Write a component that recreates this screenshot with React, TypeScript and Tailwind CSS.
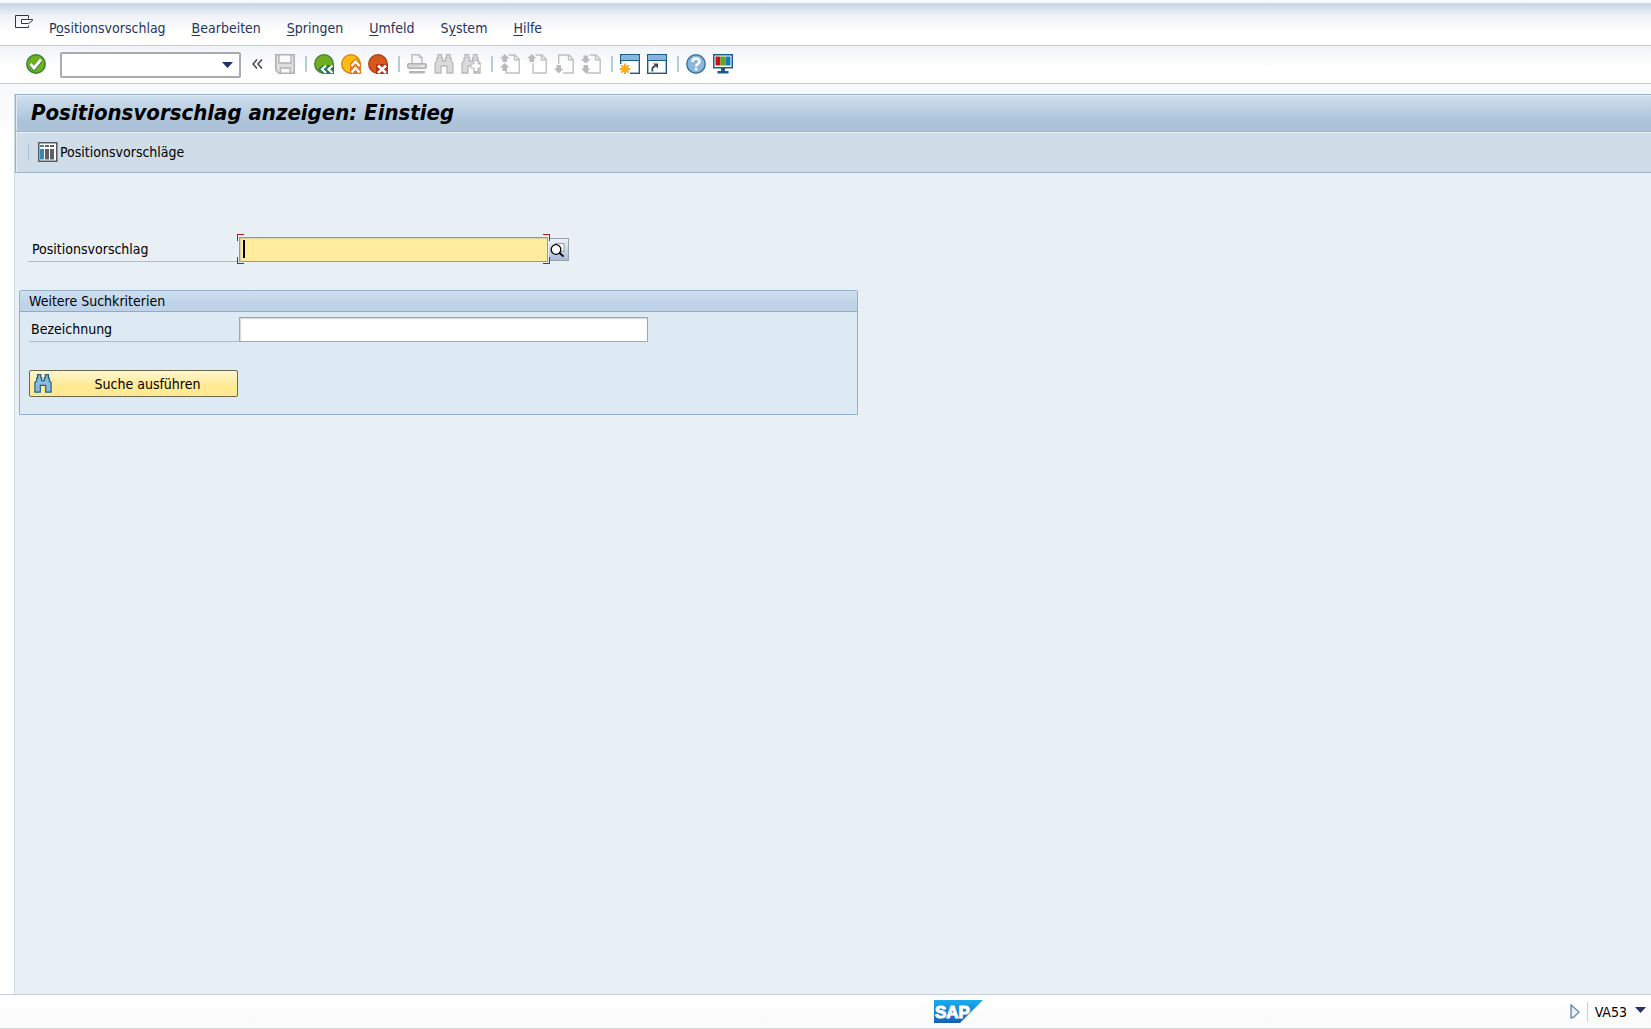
import React from "react";

const menus: [string, string, string][] = [
  ["P", "o", "sitionsvorschlag"],
  ["", "B", "earbeiten"],
  ["", "S", "pringen"],
  ["", "U", "mfeld"],
  ["S", "y", "stem"],
  ["", "H", "ilfe"],
];

function Icon({ children }: { children: React.ReactNode }) {
  return (
    <svg viewBox="0 0 20 20" className="size-5 shrink-0" aria-hidden="true">
      {children}
    </svg>
  );
}

function ToolButton({ label, disabled, children }: { label: string; disabled?: boolean; children: React.ReactNode }) {
  return (
    <button type="button" aria-label={label} disabled={disabled} className="size-5 shrink-0">
      <Icon>{children}</Icon>
    </button>
  );
}

function Separator() {
  return <span className="ml-[3px] h-4 w-[2px] shrink-0 bg-[#b4cbe0]" />;
}

function BinocularShape({ fill, stroke }: { fill: string; stroke: string }) {
  return (
    <path
      d="M4 .7h3.500v3.300h1v3h3V4h1V.7H16V4h1v3l2 2v10h-6v-7H7v7H1V9l2-2V4h1z"
      fill={fill}
      stroke={stroke}
      strokeWidth="1.300"
    />
  );
}

function PagePaper() {
  return <path d="M8.500 1H15l4.200 4.200V19H6V16.500M14.500 1v4.700h4.500" fill="none" stroke="#c0c0c0" strokeWidth="1.400" />;
}

const ARROW_UP = "M4.750 0 9.500 4.500H7V8H2.500V4.500H0z";
const ARROW_LOW_UP = "M4.750 9 9.500 13.500H7V17H2.500v-3.500H0z";
const ARROW_LOW_DOWN = "M2.500 11H7v3.500h2.500L4.750 19.500 0 14.500h2.500z";
const ARROW_MID_DOWN = "M2.500 1.500H7v3.500h2.500L4.750 9.500 0 5h2.500z";

function WindowShape() {
  return (
    <>
      <rect x="0.700" y="0.700" width="18.600" height="18.600" fill="#fbfdff" stroke="#1c5c88" strokeWidth="1.400" />
      <rect x="1.400" y="1.400" width="17.200" height="4.600" fill="#88b4dc" />
      <path d="M1 6.500h18" stroke="#1c5c88" />
    </>
  );
}

function Toolbar() {
  return (
    <div className="flex items-center gap-[7px]">
      <ToolButton label="Sichern" disabled>
        <path d="M.75.75h18.500v18.500H4L.75 16z" fill="#dedede" stroke="#b2b2b2" strokeWidth="1.500" />
        <path d="M4 .75h12V9H4zM5.500 19.250V14H15v5.250z" fill="#fafafa" stroke="#b2b2b2" strokeWidth="1.300" />
      </ToolButton>
      <Separator />
      <ToolButton label="Zurück">
        <circle cx="10" cy="10" r="9.300" fill="#6fae1f" stroke="#3f8038" strokeWidth="1.300" />
        <path d="M20 11H9l-5 4 5 5h11z" fill="#2c7a4b" />
        <path d="M12 11.500 8 15.250l4 3.750M18.500 11.500l-4 3.750 4 3.750" fill="none" stroke="#fff" strokeWidth="2.200" />
      </ToolButton>
      <ToolButton label="Beenden">
        <circle cx="10" cy="10" r="9.300" fill="#fcbd10" stroke="#dc7c1c" strokeWidth="1.300" />
        <path d="M9 9.500 14.500 4 20 9.500V20H9z" fill="#df7b1d" />
        <path d="m10.500 12 4-4.500 4 4.500M10.500 18.500l4-4.500 4 4.500" fill="none" stroke="#fff" strokeWidth="2.200" />
      </ToolButton>
      <ToolButton label="Abbrechen">
        <circle cx="10" cy="10" r="9.300" fill="#d8581a" stroke="#b03c18" strokeWidth="1.300" />
        <path d="M8 10h12v10H8z" fill="#b83212" />
        <path d="m10 11.500 8 7.500M18 11.500 10 19" stroke="#fff" strokeWidth="2.600" />
      </ToolButton>
      <Separator />
      <ToolButton label="Drucken" disabled>
        <path d="M5 10V.75h7l3 3V10" fill="#f8f8f8" stroke="#bababa" strokeWidth="1.400" />
        <path d="M12 .75v3h3" fill="none" stroke="#bababa" />
        <rect x=".7" y="9.700" width="18.600" height="4.600" rx="1.500" fill="#d6d6d6" stroke="#b0b0b0" strokeWidth="1.400" />
        <path d="M14 12h3" stroke="#fff" />
        <path d="M2 17h16v1.500q0 1-1 1H3q-1 0-1-1z" fill="#b6b6b6" />
      </ToolButton>
      <ToolButton label="Suchen" disabled>
        <BinocularShape fill="#dadada" stroke="#b8b8b8" />
      </ToolButton>
      <ToolButton label="Weitersuchen" disabled>
        <BinocularShape fill="#dadada" stroke="#b8b8b8" />
        <path d="M13 6.500h4V10h3v4h-3v3.500h-4V14h-3v-4h3z" fill="#fff" stroke="#b8b8b8" />
      </ToolButton>
      <Separator />
      <ToolButton label="Erste Seite" disabled>
        <PagePaper />
        <path d={ARROW_UP} fill="#bababa" />
        <path d={ARROW_LOW_UP} fill="#bababa" />
      </ToolButton>
      <ToolButton label="Vorige Seite" disabled>
        <path d="M8.500 1H15l4.200 4.200V19H6V9M14.500 1v4.700h4.500" fill="none" stroke="#c0c0c0" strokeWidth="1.400" />
        <path d={ARROW_UP} fill="#bababa" />
      </ToolButton>
      <ToolButton label="Nächste Seite" disabled>
        <path d="M4.700 10V1H15l4.200 4.200V19H9M14.500 1v4.700h4.500" fill="none" stroke="#c0c0c0" strokeWidth="1.400" />
        <path d={ARROW_LOW_DOWN} fill="#bababa" />
      </ToolButton>
      <ToolButton label="Letzte Seite" disabled>
        <PagePaper />
        <path d={ARROW_MID_DOWN} fill="#bababa" />
        <path d={ARROW_LOW_DOWN} fill="#bababa" />
      </ToolButton>
      <Separator />
      <ToolButton label="Neuer Modus">
        <WindowShape />
        <path d="M0 10h10v10H0z" fill="#fff" />
        <path d="M5 9.500v11M-.2 15h10.500M1.300 11.300l7.400 7.400M8.700 11.300l-7.400 7.400" stroke="#f5a21b" strokeWidth="1.800" />
        <circle cx="5" cy="15" r="3" fill="#f9ae20" />
      </ToolButton>
      <ToolButton label="Verknüpfung anlegen">
        <WindowShape />
        <path d="M5.500 17.500c-1-3 .5-5 3-5.500" fill="none" stroke="#444" strokeWidth="1.800" />
        <path d="M6 9.500h5v5z" fill="#444" />
      </ToolButton>
      <Separator />
      <ToolButton label="Hilfe">
        <circle cx="10" cy="10" r="9.200" fill="#8cb6dc" stroke="#3d73a0" strokeWidth="1.500" />
        <path d="M6.500 8c0-4.500 7-4.500 7-.5 0 2.600-3.400 2.300-3.400 5" fill="none" stroke="#fff" strokeWidth="2.500" />
        <rect x="8.800" y="13.800" width="2.600" height="2.600" fill="#fff" />
      </ToolButton>
      <ToolButton label="Lokales Layout anpassen">
        <rect x=".75" y=".75" width="18.500" height="13" fill="#fff" stroke="#1c5c88" strokeWidth="1.500" />
        <path d="M2.500 2.500h5v9h-5z" fill="#c81414" />
        <path d="M7.500 2.500h5v9h-5z" fill="#5fa81e" />
        <path d="M12.500 2.500h5v9h-5z" fill="#1679c2" />
        <path d="M8 14h4v3h3.500v2.500h-11V17H8z" fill="#1c5c88" />
      </ToolButton>
    </div>
  );
}

export default function App() {
  return (
    <div className="flex min-h-screen flex-col border-t-[3px] border-[#f5f8fc] bg-[#fdfdfe] font-['DejaVu_Sans_Condensed','DejaVu_Sans',sans-serif] text-sm text-black">
      <nav
        aria-label="Menü"
        className="flex h-[43px] items-center border-b border-[#c9cdd3] bg-linear-to-b from-[#cdd9e8] from-5% via-[#eef2f8] via-30% to-white to-70% pl-[15px] text-[#27345f]"
      >
        <button type="button" aria-label="Systemmenü" className="mr-4 mb-1">
          <svg viewBox="0 0 18 14" className="h-[14px] w-[18px]" fill="none" stroke="#27345f" aria-hidden="true">
            <path d="M13.500 3.500v-3H.5v12h13v-2" />
            <path d="M6.500 4.500h11v1l-4 3h-7z" fill="#fff" />
          </svg>
        </button>
        <div className="flex gap-[26px] pt-2">
          {menus.map(([before, key, after]) => (
            <button type="button" key={before + key + after} className="whitespace-nowrap">
              {before}
              <span className="underline underline-offset-2">{key}</span>
              {after}
            </button>
          ))}
        </div>
      </nav>

      <div className="flex h-[38px] items-center border-b border-[#c5cbd4] bg-linear-to-b from-[#eff3f8] to-white to-60% pb-px pl-[26px]">
        <ToolButton label="Weiter">
          <circle cx="10" cy="10" r="9.200" fill="#6fb01e" stroke="#3d7f3d" strokeWidth="1.500" />
          <path d="m4.500 10.500 3.500 4L15 6" fill="none" stroke="#2f7a3c" strokeWidth="4" />
          <path d="m4.500 10 3.500 4L15 5.500" fill="none" stroke="#fff" strokeWidth="2.800" />
        </ToolButton>
        <div className="relative ml-[14px]">
          <input
            aria-label="Transaktionscode"
            className="mt-px block h-[26px] w-[181px] rounded-xs border-2 border-[#a9abad] bg-white pr-6 pl-1 outline-none"
          />
          <svg viewBox="0 0 11 6" className="absolute top-[11px] right-2 h-[6px] w-[11px]" aria-hidden="true">
            <path d="M0 0h11L5.500 6z" fill="#1d3264" />
          </svg>
        </div>
        <button type="button" aria-label="Kommandofeld schließen" className="mr-3 ml-[11px]">
          <svg viewBox="0 0 11 10" className="h-[10px] w-[11px]" fill="none" stroke="#4b4b4b" strokeWidth="1.600" aria-hidden="true">
            <path d="M5 .5 1 5l4 4.500M10 .5 6 5l4 4.500" />
          </svg>
        </button>
        <Toolbar />
      </div>

      <div className="flex grow flex-col bg-linear-to-b from-[#f6f8fb] to-white to-[60px] pt-[10px] pl-[14px]">
        <main className="flex grow flex-col border-l border-[#cfd8e2] bg-[#e8f0f6]">
          <header className="border border-r-0 border-[#9db4ca]">
            <h1 className="flex h-[37px] items-center border-b border-[#a3b9cf] bg-linear-to-b from-[#cfe0ee] to-[#abc2d9] to-75% pb-px pl-[15px] text-[22px] leading-none font-bold italic shadow-[inset_1px_1px_0_#dfeaf4]">
              Positionsvorschlag anzeigen: Einstieg
            </h1>
            <div className="flex h-[40px] items-center bg-[#cfdde8] pl-3 shadow-[inset_1px_1px_0_#e6eff6]">
              <span className="h-4 w-px bg-[#a9c0d4]" />
              <button type="button" className="ml-[9px] flex items-center gap-[2px]">
                <Icon>
                  <rect x=".75" y=".75" width="18" height="18.500" fill="#fff" stroke="#55585c" strokeWidth="1.500" />
                  <path d="M2 3h4v2H2zM2 7h4v10.500H2z" fill="#3a87b4" />
                  <path d="M7 3h4v2H7zM12 3h4v2h-4zM7 7h4v10.500H7zM12 7h4v10.500h-4z" fill="#5c5f63" />
                </Icon>
                Positionsvorschläge
              </button>
            </div>
          </header>

          <form className="flex flex-col pt-16 pl-1" onSubmit={(e) => e.preventDefault()}>
            <div className="flex items-end pl-[9px]">
              <label htmlFor="proposal" className="flex h-[25px] w-[211px] items-center border-b border-[#b3bac1] pl-1">
                Positionsvorschlag
              </label>
              <div className="relative">
                <input
                  id="proposal"
                  className="block h-[25px] w-[309px] border border-[#9a9a92] bg-[#ffec9e] px-2 shadow-[inset_1px_1px_1px_#d8cfa0] outline-none"
                />
                <span className="absolute top-[3px] left-[4px] h-[18px] w-[2px] bg-black" />
                <span className="absolute -top-[3px] -left-[2px] size-[7px] border-t border-l border-[#a51c1c]" />
                <span className="absolute -bottom-[2px] -left-[2px] size-[7px] border-b border-l border-[#a51c1c]" />
                <span className="absolute -top-[3px] -right-[2px] size-[7px] border-t border-r border-[#a51c1c]" />
                <span className="absolute -right-[2px] -bottom-[2px] size-[7px] border-r border-b border-[#a51c1c]" />
              </div>
              <button
                type="button"
                aria-label="Wertehilfe"
                className="mb-px ml-px flex h-[23px] w-[20px] items-center border border-l-0 border-[#9a9fa8] bg-linear-to-b from-[#eef2f8] to-[#a9bbdb] pl-px"
              >
                <svg viewBox="0 0 16 16" className="size-4" aria-hidden="true">
                  <path d="M5 1.500h9v8H5z" fill="#f4f4f4" stroke="#a0a0a0" />
                  <circle cx="6" cy="7.500" r="4.800" fill="#fff" stroke="#000" strokeWidth="1.300" />
                  <path d="m9.500 11 4 3.500" stroke="#000" strokeWidth="1.800" />
                </svg>
              </button>
            </div>

            <section
              aria-labelledby="criteria"
              className="mt-[28px] w-[839px] max-w-full rounded-t-xs border border-[#93afcb] bg-[#deeaf3]"
            >
              <h2
                id="criteria"
                className="flex h-[21px] items-center rounded-t-xs border-b border-[#8eaac8] bg-linear-to-b from-[#cfe0ef] to-[#bfd4e9] to-60% pl-[9px] leading-none"
              >
                Weitere Suchkriterien
              </h2>
              <div className="flex flex-col items-start px-[9px] pt-[5px] pb-[17px]">
                <div className="flex items-end">
                  <label htmlFor="description" className="flex h-[25px] w-[210px] items-center border-b border-[#b3bac1] pl-[2px]">
                    Bezeichnung
                  </label>
                  <input
                    id="description"
                    className="block h-[25px] w-[409px] border border-[#a4a7aa] bg-white px-1 shadow-[inset_1px_1px_1px_#d5d5d5] outline-none"
                  />
                </div>
                <button
                  type="submit"
                  className="mt-[28px] flex h-[27px] w-[209px] items-center rounded-xs border border-[#6d6a4c] bg-linear-to-b from-[#fff6cf] to-[#ffe992] to-60% pl-1"
                >
                  <svg viewBox="0 0 20 20" className="h-[19px] w-[18px]" preserveAspectRatio="none" aria-hidden="true">
                    <BinocularShape fill="#8db9de" stroke="#1b5f84" />
                  </svg>
                  <span className="grow pl-1.5 text-center">Suche ausführen</span>
                </button>
              </div>
            </section>
          </form>
        </main>
      </div>

      <footer className="flex h-[35px] items-center border-t border-b border-t-[#c9d0d8] border-b-[#d4d6d9] bg-linear-to-b from-white to-[#fafafa]">
        <div className="flex grow justify-end">
          <svg viewBox="0 0 49 23" className="h-[23px] w-[49px]" role="img" aria-label="SAP">
            <defs>
              <linearGradient id="sapBlue" x1="0" y1="0" x2="0" y2="1">
                <stop offset="0" stopColor="#18aef0" />
                <stop offset="1" stopColor="#1760b4" />
              </linearGradient>
            </defs>
            <path d="M0 0h49L26 23H0z" fill="url(#sapBlue)" />
            <text x="1" y="18" fontSize="17" fontWeight="bold" fontFamily="Liberation Sans" fill="#fff" stroke="#fff" strokeWidth="1">
              SAP
            </text>
          </svg>
        </div>
        <div className="flex w-[668px] items-center justify-end pr-[5px]">
          <button type="button" aria-label="Statusfelder einblenden">
            <svg viewBox="0 0 10 15" className="h-[15px] w-[10px]" aria-hidden="true">
              <path d="M1 1v13l3-1 5-5z" fill="#e9f0f7" stroke="#6c8ba6" strokeWidth="1.400" />
            </svg>
          </button>
          <span className="mx-[7px] h-5 w-px bg-[#cfcfcf]" />
          <button type="button" className="flex items-center gap-2">
            VA53
            <svg viewBox="0 0 11 6" className="mb-1 h-[6px] w-[11px]" aria-hidden="true">
              <path d="M0 0h11L5.500 6z" fill="#27345f" />
            </svg>
          </button>
        </div>
      </footer>
    </div>
  );
}
